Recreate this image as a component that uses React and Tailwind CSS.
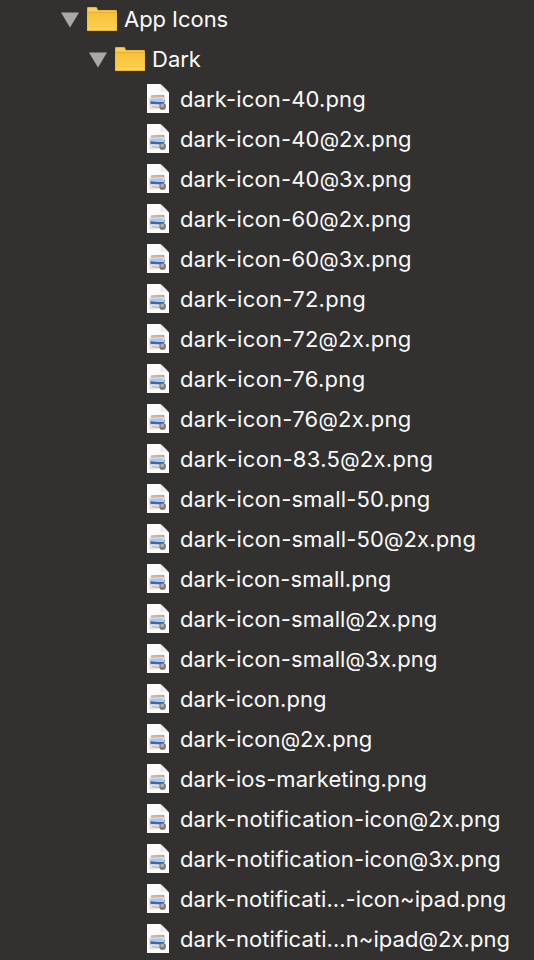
const files = [
  ["dark-icon-40.png", "tracking-[0.13px]"],
  ["dark-icon-40@2x.png", "tracking-[0.14px]"],
  ["dark-icon-40@3x.png", "tracking-[0.14px]"],
  ["dark-icon-60@2x.png", "tracking-[0.16px]"],
  ["dark-icon-60@3x.png", "tracking-[0.16px]"],
  ["dark-icon-72.png", "tracking-[0.28px]"],
  ["dark-icon-72@2x.png", "tracking-[0.28px]"],
  ["dark-icon-76.png", "tracking-[0.3px]"],
  ["dark-icon-76@2x.png", "tracking-[0.28px]"],
  ["dark-icon-83.5@2x.png", "tracking-[0.3px]"],
  ["dark-icon-small-50.png", "tracking-[0.16px]"],
  ["dark-icon-small-50@2x.png", "tracking-[0.16px]"],
  ["dark-icon-small.png", "tracking-[0.07px]"],
  ["dark-icon-small@2x.png", "tracking-[0.12px]"],
  ["dark-icon-small@3x.png", "tracking-[0.12px]"],
  ["dark-icon.png", "tracking-[0.04px]"],
  ["dark-icon@2x.png", "tracking-[0.1px]"],
  ["dark-ios-marketing.png", "tracking-[0.05px]"],
  ["dark-notification-icon@2x.png", "tracking-[0.13px]"],
  ["dark-notification-icon@3x.png", "tracking-[0.13px]"],
  ["dark-notificati...-icon~ipad.png", "tracking-[0.06px]"],
  ["dark-notificati...n~ipad@2x.png", "tracking-[0.07px]"],
];

function Disclosure() {
  return (
    <svg className="h-4 w-[18px] shrink-0" viewBox="0 0 18 16">
      <path d="M0 0.5H18L9 15.5Z" fill="#a9a9a8" />
    </svg>
  );
}

function Folder() {
  return (
    <svg className="h-6 w-[30px] shrink-0" viewBox="0 0 30 24">
      <defs>
        <linearGradient id="folder" x1="0" y1="0" x2="0" y2="1">
          <stop offset="0" stopColor="#f6c036" />
          <stop offset="0.8" stopColor="#fccd4c" />
          <stop offset="1" stopColor="#ffd763" />
        </linearGradient>
      </defs>
      <path d="M0 24V1Q0 0 1 0H9Q10 0 10.5 1.5L11 3H29Q30 3 30 4V24Z" fill="#d09b25" />
      <path d="M.5 23.3V1Q.5 .6 1 .6H9Q9.5 .6 10 2L10.6 3.6H29.5V23.3Z" fill="#fbd053" />
      <path d="M.5 5.5H29.5V23.3H.5Z" fill="url(#folder)" />
      <path d="M.5 5.3H29.5" stroke="#dca42c" strokeWidth=".8" />
    </svg>
  );
}

function ImageFile() {
  return (
    <svg className="h-[29px] w-[22px] shrink-0" viewBox="0 0 22 29">
      <path d="M0 0H13.5C15 1.5 20 6 22 8.5V29H0Z" fill="#fcfcfc" />
      <path d="M13.5 0C15 2.5 14.2 6 13.5 7.6C17 7 20 7.2 22 8.5C20 6 16 2 13.5 0Z" fill="#d5d5d5" />
      <path d="M14.4 1.8C15.2 3.5 14.8 5.4 14.4 6.7C17 6.3 18.5 6.5 20 7Z" fill="#f5f5f5" />
      <path d="M4 11.4L17.2 10.8L18.4 22L5 23Z" fill="#d9d2ca" />
      <path d="M4.2 11.6L17 11L17.3 13.4L4.4 14Z" fill="#c39a78" />
      <path d="M5 12.6L16 12.1" stroke="#e2c9b0" strokeWidth=".6" />
      <path d="M2.1 13.8L16.6 13L17.6 24L3.1 25.2Z" fill="#e9ebee" stroke="#c6c6c6" strokeWidth=".4" />
      <path d="M3.1 14.7L15.8 14L16.2 17.8L3.4 18.4Z" fill="#a9c8f0" />
      <path d="M3.3 17.2C7 17 10 18.6 16.2 17.9L16.4 20.3L3.6 20.8Z" fill="#3a67b0" />
      <path d="M3.6 20.1C8 19.7 12 21.6 16.5 20.8L16.8 23L3.9 23.9Z" fill="#e6e1d8" />
      <path d="M5 22.6L12 23.6" stroke="#b89f86" strokeWidth=".8" />
      <circle cx="15.6" cy="22.2" r="3.3" fill="#7d7973" />
      <circle cx="15.3" cy="21.6" r="1.9" fill="#b1aea8" />
      <path d="M13.4 25H18" stroke="#686660" strokeWidth="1" />
      <path d="M16.3 18.9L17.7 16.4" stroke="#77736f" strokeWidth="1" />
    </svg>
  );
}

function FileName({ name, tracking }) {
  const [base, scale] = name.split("@");
  return (
    <span className={`ml-[11px] whitespace-nowrap ${tracking}`}>
      {base}
      {scale && <span className="text-[20px] leading-none">@</span>}
      {scale}
    </span>
  );
}

export default function App() {
  return (
    <main className="h-[960px] w-[534px] overflow-hidden bg-[#323130] font-['Inter','Liberation_Sans',sans-serif] text-[22px] leading-[38px] text-[#fafafa]">
      <div className="flex h-10 items-start pl-[61px]">
        <div className="flex h-10 items-center"><Disclosure /></div>
        <div className="ml-2 flex h-[38px] items-center"><Folder /></div>
        <span className="ml-[7px] whitespace-nowrap tracking-[-0.05px]">App Icons</span>
      </div>
      <div className="flex h-10 items-start pl-[89px]">
        <div className="flex h-10 items-center"><Disclosure /></div>
        <div className="ml-2 flex h-[38px] items-center"><Folder /></div>
        <span className="ml-[7px] whitespace-nowrap">Dark</span>
      </div>
      {files.map(([name, tracking]) => (
        <div key={name} className="flex h-10 items-start pl-[147px]">
          <div className="flex pt-1"><ImageFile /></div>
          <FileName name={name} tracking={tracking} />
        </div>
      ))}
    </main>
  );
}
